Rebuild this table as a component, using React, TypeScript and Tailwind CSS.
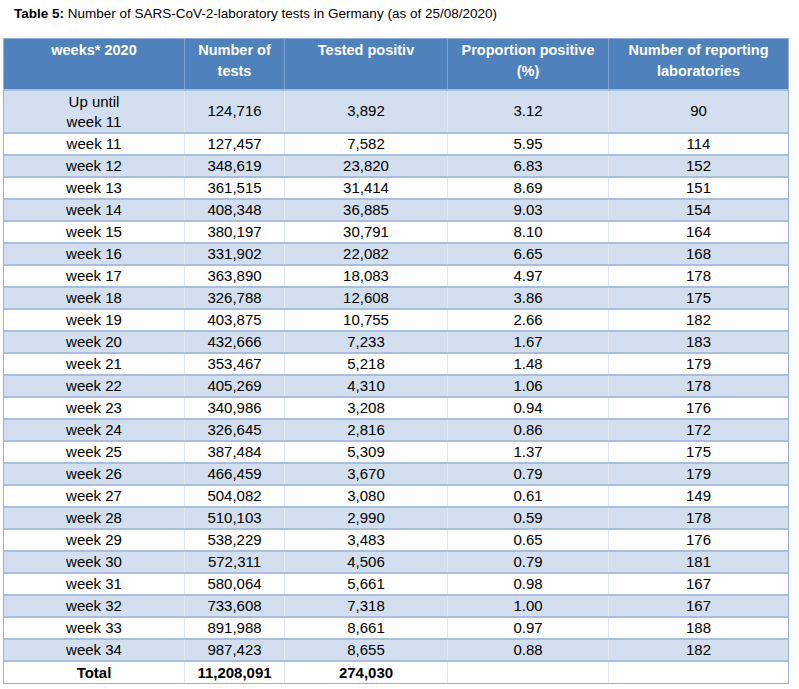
const ROWS: [string, string, string, string, string][] = [
  ["week 11", "127,457", "7,582", "5.95", "114"],
  ["week 12", "348,619", "23,820", "6.83", "152"],
  ["week 13", "361,515", "31,414", "8.69", "151"],
  ["week 14", "408,348", "36,885", "9.03", "154"],
  ["week 15", "380,197", "30,791", "8.10", "164"],
  ["week 16", "331,902", "22,082", "6.65", "168"],
  ["week 17", "363,890", "18,083", "4.97", "178"],
  ["week 18", "326,788", "12,608", "3.86", "175"],
  ["week 19", "403,875", "10,755", "2.66", "182"],
  ["week 20", "432,666", "7,233", "1.67", "183"],
  ["week 21", "353,467", "5,218", "1.48", "179"],
  ["week 22", "405,269", "4,310", "1.06", "178"],
  ["week 23", "340,986", "3,208", "0.94", "176"],
  ["week 24", "326,645", "2,816", "0.86", "172"],
  ["week 25", "387,484", "5,309", "1.37", "175"],
  ["week 26", "466,459", "3,670", "0.79", "179"],
  ["week 27", "504,082", "3,080", "0.61", "149"],
  ["week 28", "510,103", "2,990", "0.59", "178"],
  ["week 29", "538,229", "3,483", "0.65", "176"],
  ["week 30", "572,311", "4,506", "0.79", "181"],
  ["week 31", "580,064", "5,661", "0.98", "167"],
  ["week 32", "733,608", "7,318", "1.00", "167"],
  ["week 33", "891,988", "8,661", "0.97", "188"],
  ["week 34", "987,423", "8,655", "0.88", "182"],
];

const COLS = "grid grid-cols-[180px_100px_163px_161px_1fr]";

export default function App() {
  return (
    <div className="min-h-screen w-[799px] bg-white pt-[5px] font-['Liberation_Sans',Arial,sans-serif] text-black">
      <p className="pl-[14px] text-[13.5px] leading-[17px]">
        <b>Table 5:</b> Number of SARS-CoV-2-laboratory tests in Germany (as of 25/08/2020)
      </p>

      <div className="ml-[3px] mt-[16px] w-[786px] border border-[#95b3d7]">
        {/* header */}
        <div className={`${COLS} h-[52px] border-b-2 border-[#a7bfde] bg-[#4f81bd] text-[14.5px] font-bold leading-[21px] text-white`}>
          {["weeks* 2020", "Number of tests", "Tested positiv", "Proportion positive (%)", "Number of reporting laboratories"].map((h, i) => (
            <div
              key={h}
              className={`flex justify-center pt-[1px] text-center ${i > 0 ? "border-l border-[#7ea1cf]" : ""} ${i === 1 ? "px-[10px]" : i === 4 ? "px-[14px]" : "px-1"}`}
            >
              {h}
            </div>
          ))}
        </div>

        {/* first row */}
        <div className={`${COLS} h-[43px] border-b-2 border-[#a7bfde] bg-[#d3dfee] text-[15px]`}>
          <div className="flex items-center justify-center text-center leading-[20px]">
            Up until
            <br />
            week 11
          </div>
          {["124,716", "3,892", "3.12", "90"].map((v, i) => (
            <div key={i} className="flex items-center justify-center border-l border-[#e4ebf5]">
              {v}
            </div>
          ))}
        </div>

        {ROWS.map((r, idx) => (
          <div
            key={r[0]}
            className={`${COLS} h-[22px] border-b-2 border-[#a7bfde] text-[15px] leading-[20px] ${idx % 2 === 1 ? "bg-[#d3dfee]" : "bg-white"}`}
          >
            {r.map((v, i) => (
              <div
                key={i}
                className={`flex items-center justify-center ${i > 0 ? `border-l ${idx % 2 === 1 ? "border-[#e4ebf5]" : "border-[#dde6f2]"}` : ""}`}
              >
                {v}
              </div>
            ))}
          </div>
        ))}

        {/* total */}
        <div className={`${COLS} h-[21px] bg-white text-[15px] font-bold leading-[20px]`}>
          {["Total", "11,208,091", "274,030", "", ""].map((v, i) => (
            <div key={i} className={`flex items-center justify-center ${i > 0 ? "border-l border-[#dde6f2]" : ""}`}>
              {v}
            </div>
          ))}
        </div>
      </div>
    </div>
  );
}
